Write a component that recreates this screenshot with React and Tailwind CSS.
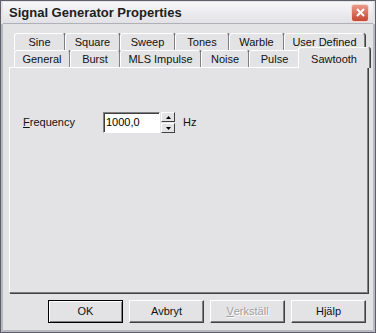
import { useState } from "react";

const backRow = [
  { label: "Sine", w: "w-[51px]" },
  { label: "Square", w: "w-[55px]" },
  { label: "Sweep", w: "w-[55px]" },
  { label: "Tones", w: "w-[54px]" },
  { label: "Warble", w: "w-[55px]" },
  { label: "User Defined", w: "w-[81px]" },
];

const frontRow = [
  { label: "General", w: "w-[56px]" },
  { label: "Burst", w: "w-[50px]" },
  { label: "MLS Impulse", w: "w-[81px]" },
  { label: "Noise", w: "w-[48px]" },
  { label: "Pulse", w: "w-[51px]" },
];

function Tab({ label, w }) {
  return (
    <div
      className={`${w} h-[17px] shrink-0 flex items-center justify-center bg-[#e3e3e6] border-t border-l border-white border-r border-r-[#808080] rounded-t-[3px] shadow-[1px_0_0_#404040] text-[11px] text-[#111]`}
    >
      {label}
    </div>
  );
}

function Button({ children, isDefault, disabled }) {
  return (
    <button
      className={`w-[75px] h-[23px] flex items-center justify-center bg-[#e3e3e6] text-[11px] ${
        isDefault
          ? "border border-black shadow-[inset_1px_1px_0_#ffffff,inset_-1px_-1px_0_#808080]"
          : "border border-t-white border-l-white border-r-[#404040] border-b-[#404040] shadow-[inset_-1px_-1px_0_#808080]"
      } ${disabled ? "text-[#a0a0a0] [text-shadow:1px_1px_0_#ffffff]" : "text-[#111]"}`}
    >
      {children}
    </button>
  );
}

function App() {
  const [freq, setFreq] = useState("1000,0");

  return (
    <div
      className="w-[376px] h-[333px] bg-[#e3e3e6] border border-[#5f5f6a] flex flex-col"
      style={{ fontFamily: '"Liberation Sans", Arial, sans-serif' }}
    >
      <div className="h-[22px] mx-[2px] mt-[1px] flex items-center justify-between pl-[6px] pr-[4px] bg-gradient-to-b from-[#f7f7f9] to-[#e2e2e6] border-b border-[#b0b0b8]">
        <span className="text-[13px] font-bold text-[#202020]">Signal Generator Properties</span>
        <div className="w-[18px] h-[18px] rounded-[3px] border border-[#f6d6cf] bg-gradient-to-b from-[#e99a8a] to-[#c4452f] flex items-center justify-center">
          <svg width="9" height="9" viewBox="0 0 9 9">
            <path d="M1 1 L8 8 M8 1 L1 8" stroke="#ffffff" strokeWidth="2" />
          </svg>
        </div>
      </div>

      <div className="flex-1 flex flex-col border-x-2 border-b-2 border-[#b8b8c2] px-[6px]">
        <div className="mt-[9px] ml-[5px] flex">
          {backRow.map((t) => (
            <Tab key={t.label} {...t} />
          ))}
        </div>
        <div className="ml-[5px] h-[17px] flex items-end">
          {frontRow.map((t) => (
            <Tab key={t.label} {...t} />
          ))}
          <div className="relative z-10 -mb-px -ml-[2px] w-[72px] h-[21px] shrink-0 flex items-start justify-center pt-[3px] bg-[#e3e3e6] border-t border-l border-white border-r border-r-[#808080] rounded-t-[3px] shadow-[1px_0_0_#404040] text-[11px] text-[#111]">
            Sawtooth
          </div>
        </div>

        <div className="h-[226px] w-[359px] border-t border-l border-white border-r border-r-[#808080] border-b border-b-[#808080] shadow-[1px_1px_0_#404040] pl-[13px] pt-[44px]">
          <div className="flex items-center h-[21px]">
            <span className="w-[80px] text-[11px] text-[#111]">
              <span className="underline">F</span>requency
            </span>
            <div className="w-[57px] h-[21px] bg-white border border-t-[#808080] border-l-[#808080] border-r-white border-b-white shadow-[inset_1px_1px_0_#404040] flex items-center pl-[2px]">
              <input
                value={freq}
                onChange={(e) => setFreq(e.target.value)}
                className="w-full bg-transparent outline-none text-[11px] text-black"
              />
            </div>
            <div className="ml-[1px] w-[14px] h-[21px] flex flex-col gap-[1px]">
              <div className="flex-1 bg-[#e3e3e6] border border-t-white border-l-white border-r-[#404040] border-b-[#404040] flex items-center justify-center">
                <svg width="5" height="3" viewBox="0 0 5 3">
                  <path d="M0 3 L2.5 0 L5 3 Z" fill="#000" />
                </svg>
              </div>
              <div className="flex-1 bg-[#e3e3e6] border border-t-white border-l-white border-r-[#404040] border-b-[#404040] flex items-center justify-center">
                <svg width="5" height="3" viewBox="0 0 5 3">
                  <path d="M0 0 L2.5 3 L5 0 Z" fill="#000" />
                </svg>
              </div>
            </div>
            <span className="ml-[8px] text-[11px] text-[#111]">Hz</span>
          </div>
        </div>

        <div className="mt-[7px] flex justify-end gap-[6px] pr-[1px]">
          <Button isDefault>OK</Button>
          <Button>Avbryt</Button>
          <Button disabled>
            <span className="underline">V</span>erkställ
          </Button>
          <Button>Hjälp</Button>
        </div>
      </div>
    </div>
  );
}

export default App;
